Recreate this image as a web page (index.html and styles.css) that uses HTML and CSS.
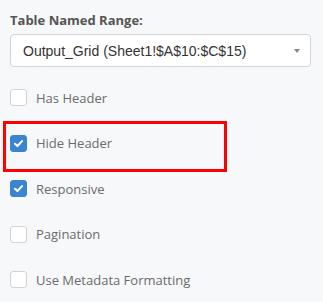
FILE: index.html
```html
<!DOCTYPE html>
<html lang="en">
<head>
  <meta charset="UTF-8" />
  <title>Table Options</title>
  <link rel="stylesheet" href="styles.css">
</head>
<body>
  <div class="panel">
    <label class="field-label" for="namedRange">Table Named Range:</label>
    <div class="select">
      <span class="select-value" id="namedRange">Output_Grid (Sheet1!$A$10:$C$15)</span>
      <span class="select-arrow"></span>
    </div>

    <div class="options">
      <div class="option">
        <span class="box"></span>
        <span class="option-text">Has Header</span>
      </div>
      <div class="option highlight">
        <span class="box checked"><svg viewBox="0 0 17 17"><path d="M4.5 8.8 L7.3 11.4 L12.5 5.8" /></svg></span>
        <span class="option-text">Hide Header</span>
      </div>
      <div class="option">
        <span class="box checked"><svg viewBox="0 0 17 17"><path d="M4.5 8.8 L7.3 11.4 L12.5 5.8" /></svg></span>
        <span class="option-text">Responsive</span>
      </div>
      <div class="option">
        <span class="box"></span>
        <span class="option-text">Pagination</span>
      </div>
      <div class="option">
        <span class="box"></span>
        <span class="option-text">Use Metadata Formatting</span>
      </div>
    </div>
  </div>
</body>
</html>
```

FILE: styles.css
```css
* {
  margin: 0;
  padding: 0;
  box-sizing: border-box;
}

body {
  font-family: "Open Sans", sans-serif;
  background: #f7f8fa;
  width: 323px;
  height: 302px;
  overflow: hidden;
}

.panel {
  padding: 11px 12px 0 10px;
}

.field-label {
  display: block;
  font-size: 13px;
  font-weight: bold;
  color: #555;
  line-height: 18px;
  margin-bottom: 5px;
}

.select {
  display: flex;
  align-items: center;
  height: 33px;
  width: 301px;
  background: #fff;
  border: 1px solid #d4d4d4;
  border-radius: 4px;
  padding: 0 8px 0 12px;
}

.select-value {
  flex: 1;
  font-family: "Liberation Sans", Arial, sans-serif;
  font-size: 14px;
  color: #333;
}

.select-arrow {
  width: 0;
  height: 0;
  border-left: 3.5px solid transparent;
  border-right: 3.5px solid transparent;
  border-top: 4px solid #888;
  margin-right: 2px;
}

.options {
  display: flex;
  flex-direction: column;
  margin-top: 22px;
  gap: 28.5px;
}

.option {
  position: relative;
  display: flex;
  align-items: center;
  height: 17px;
}

.highlight::before {
  content: "";
  position: absolute;
  left: -7px;
  top: -14px;
  width: 218px;
  height: 45px;
  border: 3px solid #ff0000;
}

.box {
  width: 17px;
  height: 17px;
  border: 1px solid #d2d2d2;
  border-radius: 3px;
  background: #fff;
  margin-right: 9px;
  flex-shrink: 0;
}

.box.checked {
  background: #3b84d1;
  border-color: #3b84d1;
}

.box svg {
  display: block;
  width: 15px;
  height: 15px;
}

.box path {
  fill: none;
  stroke: #fff;
  stroke-width: 2.4;
  stroke-linecap: round;
  stroke-linejoin: round;
}

.option-text {
  font-size: 13px;
  color: #6b6b6b;
}
```
